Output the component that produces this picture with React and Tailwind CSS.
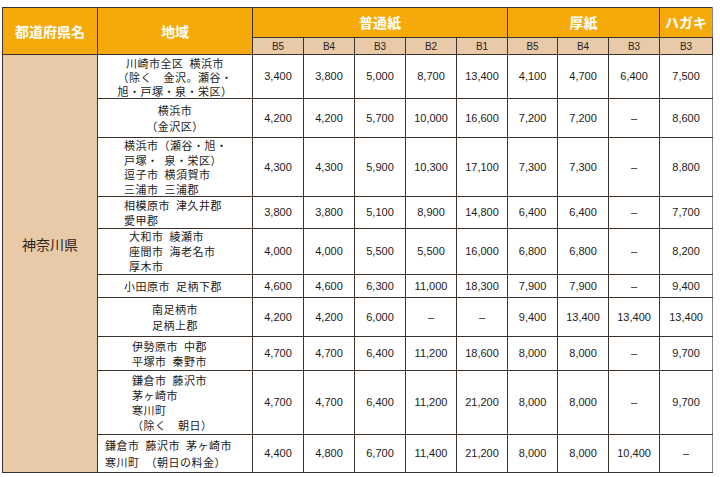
const rows = [
    {
        h: 'h-[44px]',
        area: ['川崎市全区 横浜市', '（除く　金沢。瀬谷・', '旭・戸塚・泉・栄区）'],
        align: 'text-center',
        lead: 'leading-[14px]',
        vals: ['3,400', '3,800', '5,000', '8,700', '13,400', '4,100', '4,700', '6,400', '7,500'],
    },
    {
        h: 'h-[39px]',
        area: ['横浜市', '（金沢区）'],
        align: 'text-center',
        lead: 'leading-[16px]',
        vals: ['4,200', '4,200', '5,700', '10,000', '16,600', '7,200', '7,200', '–', '8,600'],
    },
    {
        h: 'h-[59px]',
        area: ['横浜市（瀬谷・旭・', '戸塚・ 泉・栄区）', '逗子市 横須賀市', '三浦市 三浦郡'],
        align: 'text-left pl-[26px]',
        lead: 'leading-[14.5px]',
        vals: ['4,300', '4,300', '5,900', '10,300', '17,100', '7,300', '7,300', '–', '8,800'],
    },
    {
        h: 'h-[32px]',
        area: ['相模原市 津久井郡', '愛甲郡'],
        align: 'text-left pl-[26px]',
        lead: 'leading-[15px]',
        vals: ['3,800', '3,800', '5,100', '8,900', '14,800', '6,400', '6,400', '–', '7,700'],
    },
    {
        h: 'h-[46px]',
        area: ['大和市 綾瀬市', '座間市 海老名市', '厚木市'],
        align: 'text-left pl-[31px]',
        lead: 'leading-[15px]',
        vals: ['4,000', '4,000', '5,500', '5,500', '16,000', '6,800', '6,800', '–', '8,200'],
    },
    {
        h: 'h-[23px]',
        area: ['小田原市 足柄下郡'],
        align: 'text-left pl-[26px]',
        lead: 'leading-[14px]',
        vals: ['4,600', '4,600', '6,300', '11,000', '18,300', '7,900', '7,900', '–', '9,400'],
    },
    {
        h: 'h-[39px]',
        area: ['南足柄市', '足柄上郡'],
        align: 'text-center',
        lead: 'leading-[16px]',
        vals: ['4,200', '4,200', '6,000', '–', '–', '9,400', '13,400', '13,400', '13,400'],
    },
    {
        h: 'h-[34px]',
        area: ['伊勢原市 中郡', '平塚市 秦野市'],
        align: 'text-left pl-[34px]',
        lead: 'leading-[15px]',
        vals: ['4,700', '4,700', '6,400', '11,200', '18,600', '8,000', '8,000', '–', '9,700'],
    },
    {
        h: 'h-[64px]',
        area: ['鎌倉市 藤沢市', '茅ヶ崎市', '寒川町', '（除く　朝日）'],
        align: 'text-left pl-[34px]',
        lead: 'leading-[15px]',
        vals: ['4,700', '4,700', '6,400', '11,200', '21,200', '8,000', '8,000', '–', '9,700'],
    },
    {
        h: 'h-[38px]',
        area: ['鎌倉市 藤沢市 茅ヶ崎市', '寒川町 （朝日の料金）'],
        align: 'text-left pl-[7px]',
        lead: 'leading-[17px]',
        vals: ['4,400', '4,800', '6,700', '11,400', '21,200', '8,000', '8,000', '10,400', '–'],
    },
];

const subHeads = ['B5', 'B4', 'B3', 'B2', 'B1', 'B5', 'B4', 'B3', 'B3'];
const widths = ['w-[95px]', 'w-[155px]', 'w-[51px]', 'w-[51px]', 'w-[51px]', 'w-[51px]', 'w-[51px]', 'w-[50px]', 'w-[51px]', 'w-[51px]', 'w-[53px]'];

export default function App() {
    return (
        <div
            className="w-[720px] h-[477px] bg-white pt-[7px] pl-[2px]"
            style={{ fontFamily: '"Liberation Sans", "Noto Sans CJK JP", sans-serif' }}
        >
            <table className="table-fixed border-collapse w-[710px] border-r border-r-[#8d8580]">
                <colgroup>
                    {widths.map((w, i) => (
                        <col key={i} className={w} />
                    ))}
                </colgroup>
                <thead>
                    <tr className="h-[30px] bg-[#f5aa0a] text-white font-bold text-[14px] font-['Noto_Sans_CJK_JP',sans-serif]">
                        <th rowSpan={2} className="border border-[#3d312b] font-bold">都道府県名</th>
                        <th rowSpan={2} className="border border-[#3d312b] font-bold">地域</th>
                        <th colSpan={5} className="border border-[#3d312b] font-bold">普通紙</th>
                        <th colSpan={3} className="border border-[#3d312b] font-bold">厚紙</th>
                        <th className="border border-[#3d312b] border-r-[#8d8580] font-bold">ハガキ</th>
                    </tr>
                    <tr className="h-[17px] bg-[#e8caa9] text-[#2b2420] text-[10px]">
                        {subHeads.map((s, i) => (
                            <th key={i} className="border border-[#3d312b] font-normal leading-[15px]">{s}</th>
                        ))}
                    </tr>
                </thead>
                <tbody>
                    {rows.map((r, i) => (
                        <tr key={i} className={r.h}>
                            {i === 0 && (
                                <td
                                    rowSpan={rows.length}
                                    className="border border-[#3d312b] bg-[#e8caa9] text-center text-[14px] text-[#2b2420] pb-[38px] font-['Noto_Sans_CJK_JP',sans-serif]"
                                >
                                    神奈川県
                                </td>
                            )}
                            <td
                                className={`border border-[#3d312b] text-[11px] tracking-[0.5px] [word-spacing:3px] text-[#1e1a18] font-['Noto_Sans_CJK_JP',sans-serif] ${r.align} ${r.lead}`}
                            >
                                {r.area.map((line, j) => (
                                    <div key={j} className="whitespace-nowrap">{line}</div>
                                ))}
                            </td>
                            {r.vals.map((v, j) => (
                                <td
                                    key={j}
                                    className={`border border-[#3d312b] text-center text-[11px] text-[#1e1a18] ${j === 8 ? 'border-r-[#8d8580]' : ''}`}
                                >
                                    {v}
                                </td>
                            ))}
                        </tr>
                    ))}
                </tbody>
            </table>
        </div>
    );
}
